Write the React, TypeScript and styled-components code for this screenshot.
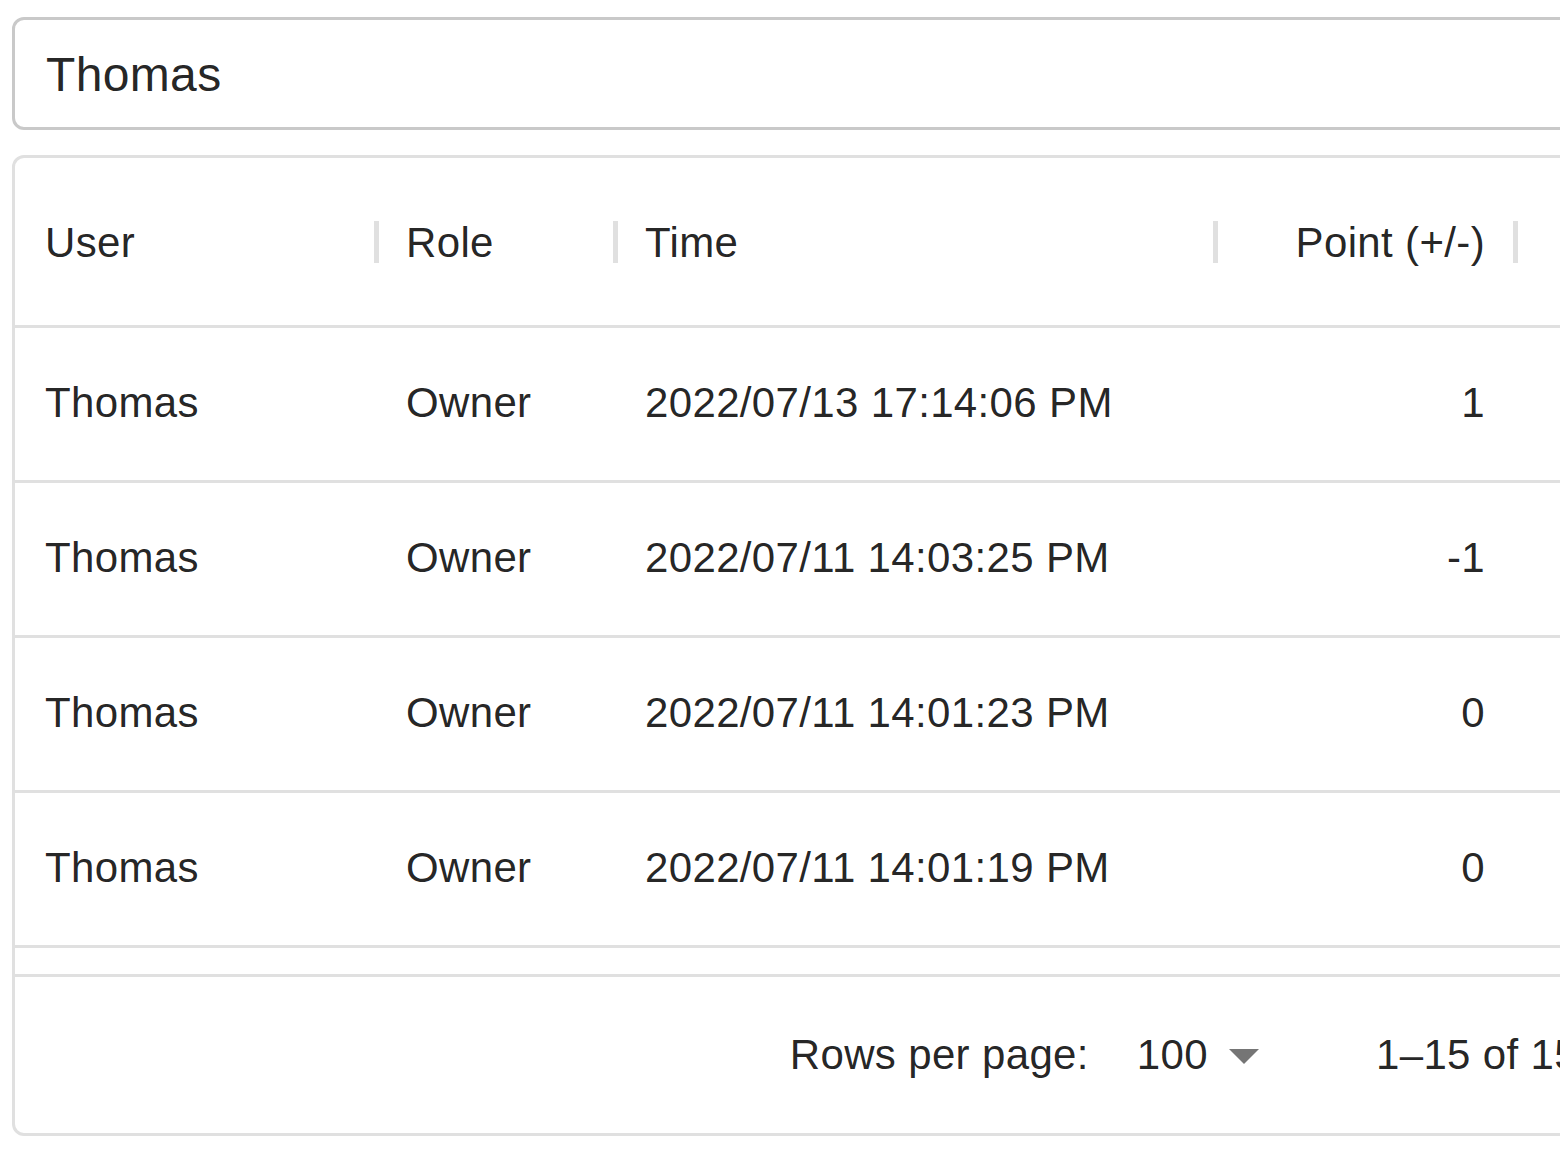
import React from "react";
import styled, {createGlobalStyle} from "styled-components";

const Global = createGlobalStyle`
  html, body {
    margin: 0;
    padding: 0;
    background: #fff;
    overflow: hidden;
  }
  body {
    font-family: "Liberation Sans", Arial, Helvetica, sans-serif;
    color: rgba(0, 0, 0, 0.87);
    letter-spacing: 0.35px;
  }
`;

const Page = styled.div`
  width: 1875px;
  padding: 17px 0 0 12px;
  display: flex;
  flex-direction: column;
  gap: 25px;
`;

const Search = styled.div`
  height: 113px;
  box-sizing: border-box;
  border: 3px solid #c9c9c9;
  border-radius: 12px;
  display: flex;
  align-items: center;
  padding: 0 31px;
`;

const SearchInput = styled.input`
  flex: 1;
  border: none;
  outline: none;
  background: transparent;
  font-family: inherit;
  letter-spacing: inherit;
  font-size: 48px;
  color: rgba(0, 0, 0, 0.87);
  padding: 0;
  margin-top: 2px;
`;

const Grid = styled.div`
  border: 3px solid #e0e0e0;
  border-radius: 12px;
  display: flex;
  flex-direction: column;
  font-size: 42px;
`;

const HeaderRow = styled.div`
  display: flex;
  height: 170px;
  box-sizing: border-box;
  border-bottom: 3px solid #e0e0e0;
`;

const HeaderCell = styled.div<{$w: number; $right?: boolean}>`
  position: relative;
  width: ${(p) => p.$w}px;
  flex: none;
  box-sizing: border-box;
  padding: 0 30px;
  display: flex;
  align-items: center;
  justify-content: ${(p) => (p.$right ? "flex-end" : "flex-start")};
  padding-top: 2px;

  &::after {
    content: "";
    position: absolute;
    right: -3px;
    top: 63px;
    width: 5px;
    height: 42px;
    background: #e0e0e0;
  }
`;

const Viewport = styled.div`
  height: 646px;
  overflow: hidden;
`;

const Row = styled.div`
  display: flex;
  height: 155px;
  box-sizing: border-box;
  border-bottom: 3px solid #e0e0e0;
`;

const Cell = styled.div<{$w: number; $right?: boolean}>`
  width: ${(p) => p.$w}px;
  flex: none;
  box-sizing: border-box;
  padding: 0 30px 3px;
  display: flex;
  align-items: center;
  justify-content: ${(p) => (p.$right ? "flex-end" : "flex-start")};
  white-space: nowrap;
`;

const Footer = styled.div`
  height: 159px;
  box-sizing: border-box;
  border-top: 3px solid #e0e0e0;
  display: flex;
  align-items: center;
  justify-content: flex-end;
  padding-right: 6px;
`;

const Label = styled.span`
  font-size: 42px;
`;

const PerPage = styled.div`
  position: relative;
  display: flex;
  align-items: center;
  margin: 0 96px 0 24px;
  padding: 0 72px 0 24px;
  font-size: 42px;

  svg {
    position: absolute;
    right: 0;
    top: 50%;
    margin-top: -36px;
  }
`;

const Shown = styled.span`
  font-size: 42px;
`;

const Actions = styled.div`
  display: flex;
  margin-left: 60px;
`;

const NavButton = styled.button`
  width: 120px;
  height: 120px;
  border: none;
  background: none;
  padding: 24px;
  color: rgba(0, 0, 0, 0.26);
`;

const columns = [
  {key: "user", title: "User", width: 361},
  {key: "role", title: "Role", width: 239},
  {key: "time", title: "Time", width: 600},
  {key: "point", title: "Point (+/-)", width: 300, right: true},
];

const rows = [
  {user: "Thomas", role: "Owner", time: "2022/07/13 17:14:06 PM", point: 1},
  {user: "Thomas", role: "Owner", time: "2022/07/11 14:03:25 PM", point: -1},
  {user: "Thomas", role: "Owner", time: "2022/07/11 14:01:23 PM", point: 0},
  {user: "Thomas", role: "Owner", time: "2022/07/11 14:01:19 PM", point: 0},
];

export default function App() {
  const [query, setQuery] = React.useState("Thomas");

  return (
    <>
      <Global />
      <Page>
        <Search>
          <SearchInput value={query} onChange={(e) => setQuery(e.target.value)} />
        </Search>
        <Grid>
          <HeaderRow>
            {columns.map((c) => (
              <HeaderCell key={c.key} $w={c.width} $right={c.right}>
                {c.title}
              </HeaderCell>
            ))}
          </HeaderRow>
          <Viewport>
            {rows.map((r, i) => (
              <Row key={i}>
                {columns.map((c) => (
                  <Cell key={c.key} $w={c.width} $right={c.right}>
                    {String(r[c.key as keyof typeof r])}
                  </Cell>
                ))}
              </Row>
            ))}
          </Viewport>
          <Footer>
            <Label>Rows per page:</Label>
            <PerPage>
              100
              <svg width="72" height="72" viewBox="0 0 24 24" fill="rgba(0,0,0,0.54)">
                <path d="M7 10l5 5 5-5z" />
              </svg>
            </PerPage>
            <Shown>1–15 of 15</Shown>
            <Actions>
              <NavButton aria-label="previous page">
                <svg width="72" height="72" viewBox="0 0 24 24" fill="currentColor">
                  <path d="M15.41 7.41 14 6l-6 6 6 6 1.41-1.41L10.83 12z" />
                </svg>
              </NavButton>
              <NavButton aria-label="next page">
                <svg width="72" height="72" viewBox="0 0 24 24" fill="currentColor">
                  <path d="M10 6 8.59 7.41 13.17 12l-4.58 4.59L10 18l6-6z" />
                </svg>
              </NavButton>
            </Actions>
          </Footer>
        </Grid>
      </Page>
    </>
  );
}
